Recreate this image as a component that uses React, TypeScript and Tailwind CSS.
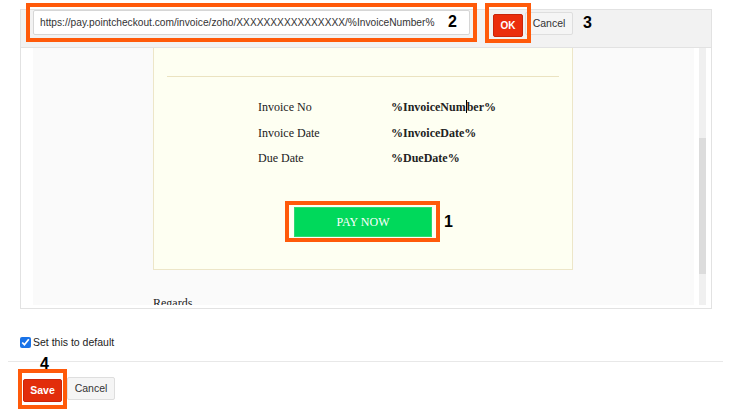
export default function App() {
  return (
    <div className="h-[412px] w-[731px] overflow-hidden bg-white font-['Liberation_Sans',Arial,sans-serif] text-[#222]">
      <div className="px-5 pt-[9px]">
        {/* Editor frame */}
        <div className="w-[692px] border border-[#e2e2e2]">
          {/* Link toolbar */}
          <div className="flex items-start border-b border-[#e2e2e2] bg-[#f2f2f2] pb-[10px] pl-3">
            <div className="relative h-[25px] w-[437px]">
              <div className="flex h-full items-center rounded-[2px] border border-[#d6d6d6] bg-white pl-[6px] text-[10.2px] text-[#333]">
                https://pay.pointcheckout.com/invoice/zoho/XXXXXXXXXXXXXXXX/%InvoiceNumber%
              </div>
              <span className="absolute right-[13px] top-[3px] text-[16px] font-bold leading-[18px] text-black">
                2
              </span>
              <div className="pointer-events-none absolute -inset-[7px] border-4 border-[#ff5a0a]" />
            </div>
            <div className="relative ml-[23px] mt-[2px]">
              <button className="h-[23px] w-[30px] rounded-[2px] border border-[#c9250a] bg-[#eb2d0c] text-[10px] font-bold text-white">
                OK
              </button>
              <div className="pointer-events-none absolute -bottom-[6px] -left-[8px] -right-[8px] -top-[9px] border-4 border-[#ff5a0a]" />
            </div>
            <button className="ml-[2px] mt-[2px] h-[23px] w-[48px] rounded-[2px] border border-[#dedede] bg-[#f5f5f5] text-[10.5px] text-[#333]">
              Cancel
            </button>
            <span className="ml-[10px] mt-[4px] text-[16px] font-bold leading-[18px] text-black">3</span>
          </div>

          {/* Editor body */}
          <div className="flex h-[260px] pl-3">
            <div className="mb-[3px] w-[661px] overflow-hidden bg-[#fafafa] font-['Liberation_Serif',serif] text-[12px] text-[#222]">
              <div className="ml-[120px] w-[420px] border-x border-b border-[#ede6c8] bg-[#fefff2] pb-[32px] pt-[28px]">
                <div className="ml-[13px] mr-[13px] h-px bg-[#ebe3c1]" />
                <div className="mt-[18px] grid grid-cols-[133px_1fr] pl-[104px] leading-[25.5px]">
                  <span>Invoice No</span>
                  <span className="font-bold">
                    %InvoiceNum
                    <span className="inline-block h-[13px] w-px bg-black align-[-2px]" />
                    ber%
                  </span>
                  <span>Invoice Date</span>
                  <span className="font-bold">%InvoiceDate%</span>
                  <span>Due Date</span>
                  <span className="font-bold">%DueDate%</span>
                </div>
                <div className="relative mx-auto mt-[35px] w-[138px]">
                  <div className="flex h-[30px] items-center justify-center border border-[#2ed872] bg-[#00d95b] text-[12px] text-white">
                    PAY NOW
                  </div>
                  <div className="pointer-events-none absolute -bottom-[5px] -left-[9px] -right-[8px] -top-[6px] border-4 border-[#ff5a0a]" />
                  <span className="absolute -right-[21px] top-[6px] font-['Liberation_Sans',Arial,sans-serif] text-[16px] font-bold leading-[18px] text-black">
                    1
                  </span>
                </div>
              </div>
              <p className="mt-[26px] pl-[120px] leading-[14px]">Regards</p>
            </div>
            <div className="mb-[3px] ml-[5px] w-[7px] bg-[#f0f0f0]">
              <div className="mt-[90px] h-[136px] bg-[#dcdcdc]" />
            </div>
          </div>
        </div>

        <label className="mt-[26px] flex items-center gap-[2px] text-[10.5px] leading-[14px] text-[#222]">
          <input type="checkbox" checked readOnly className="m-0 h-[11px] w-[11px] accent-[#1a73e8]" />
          Set this to default
        </label>
      </div>

      <div className="mx-2 mt-[12px] h-px bg-[#e8e8e8]" />

      <div className="flex pl-[23px] pt-[15px]">
        <div className="relative">
          <button className="h-[23px] w-[39px] rounded-[2px] border border-[#c9250a] bg-[#e22d0b] text-[10.5px] font-bold text-white">
            Save
          </button>
          <div className="pointer-events-none absolute -bottom-[7px] -left-[5px] -right-[5px] -top-[8px] border-4 border-[#ff5a0a]" />
          <span className="absolute -top-[22px] left-[17px] text-[16px] font-bold leading-[18px] text-black">4</span>
        </div>
        <button className="ml-[5px] h-[23px] w-[48px] rounded-[2px] border border-[#dedede] bg-[#f5f5f5] text-[10.5px] text-[#333]">
          Cancel
        </button>
      </div>
    </div>
  );
}
